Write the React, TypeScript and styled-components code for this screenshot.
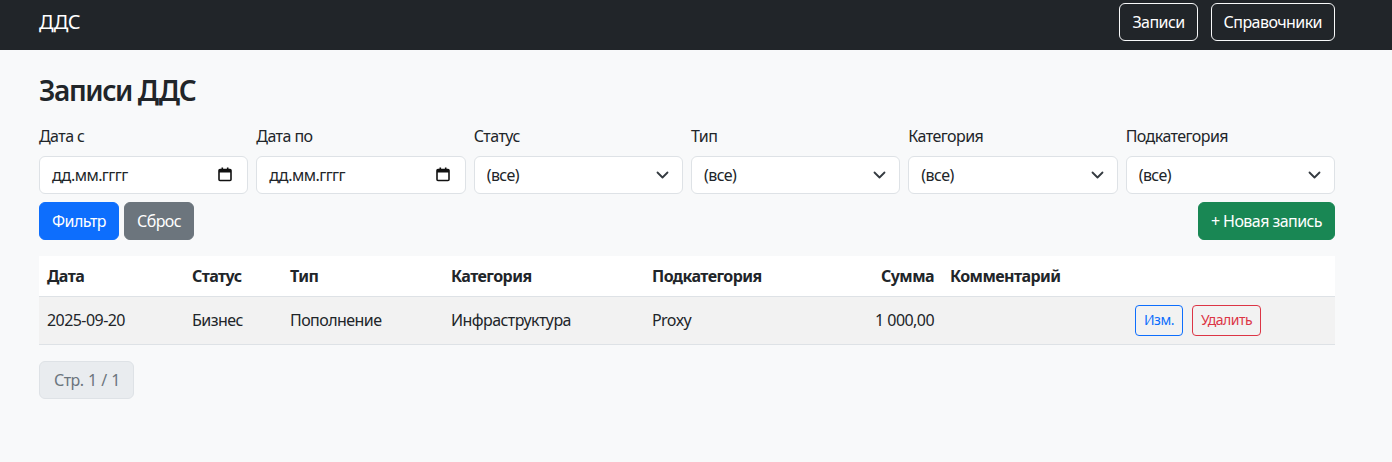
import React from "react";
import styled, { createGlobalStyle } from "styled-components";

const Global = createGlobalStyle`
  * { box-sizing: border-box; }
  html, body { margin: 0; padding: 0; }
  body {
    background: #f8f9fa;
    color: #212529;
    font-family: "Noto Sans", "Open Sans", sans-serif;
    font-size: 16px;
    line-height: 1.5;
    letter-spacing: -0.035em;
  }
  button, select { letter-spacing: -0.035em; }
`;

const Navbar = styled.nav`
  height: 50px;
  background: #212529;
  display: flex;
  align-items: center;
  padding-bottom: 6px;
`;

const NavInner = styled.div`
  width: 1296px;
  margin-left: 39px;
  display: flex;
  align-items: center;
  justify-content: space-between;
`;

const Brand = styled.span`
  color: #fff;
  font-size: 20px;
  line-height: 30px;
`;

const NavLinks = styled.div`
  display: flex;
  gap: 13px;
`;

const OutlineLight = styled.button`
  font: inherit;
  height: 38px;
  padding: 0 12px;
  background: transparent;
  color: #fff;
  border: 1px solid #f8f9fa;
  border-radius: 6px;
`;

const Main = styled.main`
  width: 1296px;
  margin-left: 39px;
  padding-top: 24px;
`;

const Title = styled.h3`
  margin: 0 0 16px;
  font-size: 28px;
  font-weight: 600;
  line-height: 1.2;
  letter-spacing: -0.05em;
`;

const FilterGrid = styled.div`
  display: grid;
  grid-template-columns: repeat(6, 1fr);
  column-gap: 8px;
`;

const Field = styled.div`
  display: flex;
  flex-direction: column;
`;

const Label = styled.label`
  margin-bottom: 8px;
  line-height: 24px;
`;

const Control = styled.div`
  height: 38px;
  background: #fff;
  border: 1px solid #dee2e6;
  border-radius: 6px;
  display: flex;
  align-items: center;
  justify-content: space-between;
  padding: 0 15px 0 12px;
`;

const Select = styled.select`
  appearance: none;
  -webkit-appearance: none;
  width: 100%;
  height: 38px;
  font: inherit;
  color: #212529;
  background: #fff;
  border: 1px solid #dee2e6;
  border-radius: 6px;
  padding: 0 36px 0 12px;
`;

const SelectWrap = styled.div`
  position: relative;
`;

const Chevron = styled.svg`
  position: absolute;
  right: 14px;
  top: 15px;
  pointer-events: none;
`;

const Actions = styled.div`
  display: flex;
  align-items: center;
  margin-top: 8px;
  gap: 5px;
`;

const Btn = styled.button<{ $bg: string }>`
  font: inherit;
  height: 38px;
  padding: 0 12px;
  border: 1px solid ${(p) => p.$bg};
  background: ${(p) => p.$bg};
  color: #fff;
  border-radius: 6px;
`;

const Spacer = styled.div`
  flex: 1;
`;

const Table = styled.table`
  margin-top: 16px;
  width: 100%;
  border-collapse: collapse;
  table-layout: fixed;
  background: #fff;
`;

const Th = styled.th<{ $right?: boolean }>`
  text-align: ${(p) => (p.$right ? "right" : "left")};
  font-weight: 700;
  padding: 8px;
  line-height: 24px;
  border-bottom: 1px solid #dee2e6;
  white-space: nowrap;
`;

const Tr = styled.tr`
  background: #f2f2f2;
`;

const Td = styled.td<{ $right?: boolean }>`
  text-align: ${(p) => (p.$right ? "right" : "left")};
  padding: 8px;
  line-height: 24px;
  border-bottom: 1px solid #dee2e6;
  vertical-align: middle;
  white-space: nowrap;
`;

const RowButtons = styled.div`
  display: flex;
  gap: 9px;
`;

const SmallOutline = styled.button<{ $c: string }>`
  font: inherit;
  font-size: 14px;
  height: 31px;
  padding: 0 8px;
  background: transparent;
  color: ${(p) => p.$c};
  border: 1px solid ${(p) => p.$c};
  border-radius: 4px;
`;

const PageBox = styled.div`
  margin-top: 16px;
  display: inline-flex;
  align-items: center;
  height: 38px;
  padding: 0 13px 0 14px;
  background: #e9ecef;
  border: 1px solid #dee2e6;
  border-radius: 6px;
  color: #6c757d;
  word-spacing: 1px;
`;

const CalendarIcon = () => (
  <svg width="14" height="15" viewBox="0 0 14 15">
    <rect x="1" y="2.5" width="12" height="11" rx="1" fill="none" stroke="#111" strokeWidth="1.6" />
    <rect x="1" y="2.5" width="12" height="3" fill="#111" />
    <rect x="3.5" y="0.5" width="1.6" height="3" fill="#111" />
    <rect x="8.9" y="0.5" width="1.6" height="3" fill="#111" />
  </svg>
);

const ChevronDown = () => (
  <Chevron width="13" height="9" viewBox="0 0 13 9">
    <path d="M1.5 1.5 L6.5 6.5 L11.5 1.5" fill="none" stroke="#343a40" strokeWidth="1.8" strokeLinecap="round" strokeLinejoin="round" />
  </Chevron>
);

const DateField = ({ label }: { label: string }) => (
  <Field>
    <Label>{label}</Label>
    <Control>
      <span>дд.мм.гггг</span>
      <CalendarIcon />
    </Control>
  </Field>
);

const SelectField = ({ label }: { label: string }) => (
  <Field>
    <Label>{label}</Label>
    <SelectWrap>
      <Select defaultValue="">
        <option value="">(все)</option>
      </Select>
      <ChevronDown />
    </SelectWrap>
  </Field>
);

export default function App() {
  return (
    <>
      <Global />
      <Navbar>
        <NavInner>
          <Brand>ДДС</Brand>
          <NavLinks>
            <OutlineLight>Записи</OutlineLight>
            <OutlineLight>Справочники</OutlineLight>
          </NavLinks>
        </NavInner>
      </Navbar>
      <Main>
        <Title>Записи ДДС</Title>
        <FilterGrid>
          <DateField label="Дата с" />
          <DateField label="Дата по" />
          <SelectField label="Статус" />
          <SelectField label="Тип" />
          <SelectField label="Категория" />
          <SelectField label="Подкатегория" />
        </FilterGrid>
        <Actions>
          <Btn $bg="#0d6efd">Фильтр</Btn>
          <Btn $bg="#6c757d">Сброс</Btn>
          <Spacer />
          <Btn $bg="#198754">+ Новая запись</Btn>
        </Actions>
        <Table>
          <colgroup>
            <col style={{ width: 145 }} />
            <col style={{ width: 98 }} />
            <col style={{ width: 161 }} />
            <col style={{ width: 201 }} />
            <col style={{ width: 198 }} />
            <col style={{ width: 100 }} />
            <col style={{ width: 185 }} />
            <col style={{ width: 208 }} />
          </colgroup>
          <thead>
            <tr>
              <Th>Дата</Th>
              <Th>Статус</Th>
              <Th>Тип</Th>
              <Th>Категория</Th>
              <Th>Подкатегория</Th>
              <Th $right>Сумма</Th>
              <Th>Комментарий</Th>
              <Th></Th>
            </tr>
          </thead>
          <tbody>
            <Tr>
              <Td>2025-09-20</Td>
              <Td>Бизнес</Td>
              <Td>Пополнение</Td>
              <Td>Инфраструктура</Td>
              <Td>Proxy</Td>
              <Td $right>1 000,00</Td>
              <Td></Td>
              <Td>
                <RowButtons>
                  <SmallOutline $c="#0d6efd">Изм.</SmallOutline>
                  <SmallOutline $c="#dc3545">Удалить</SmallOutline>
                </RowButtons>
              </Td>
            </Tr>
          </tbody>
        </Table>
        <PageBox>Стр. 1 / 1</PageBox>
      </Main>
    </>
  );
}
